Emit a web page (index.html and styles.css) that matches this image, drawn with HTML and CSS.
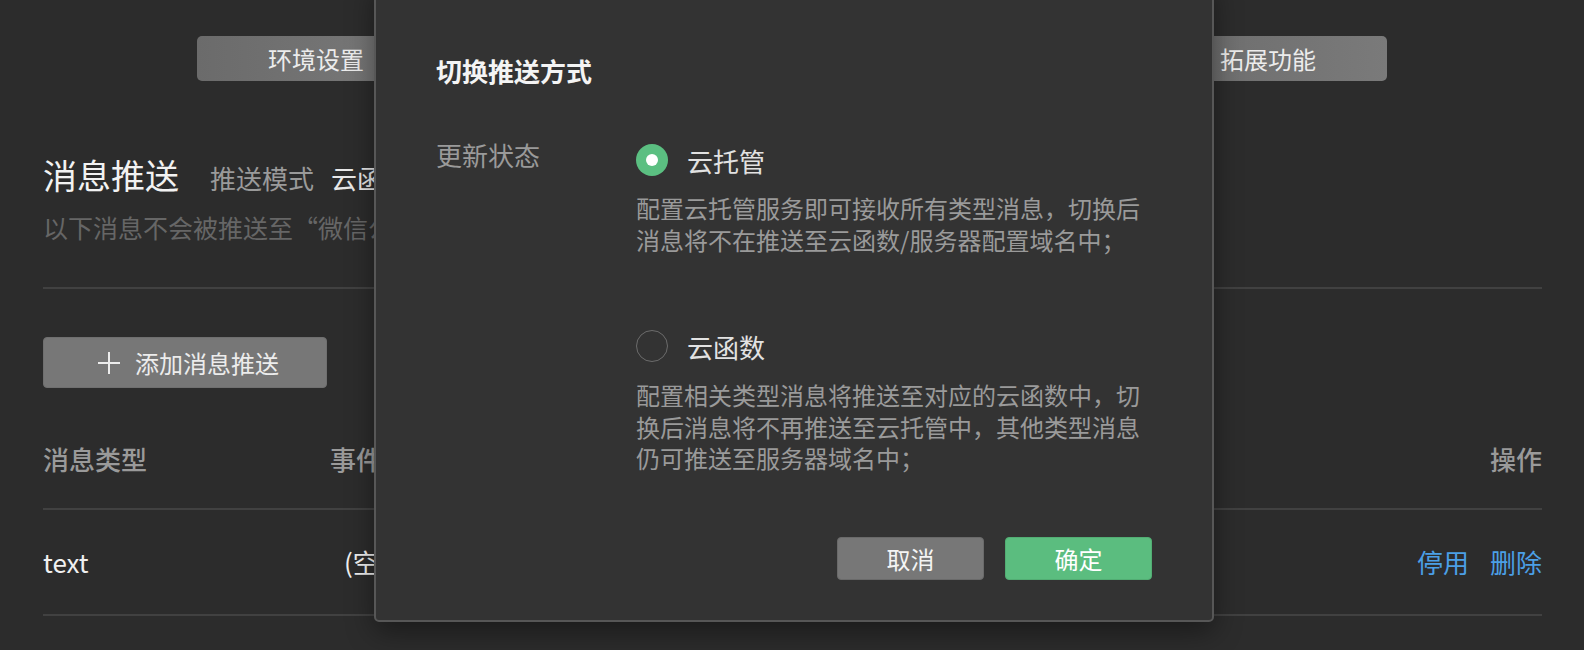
FILE: index.html
```html
<!DOCTYPE html>
<html lang="zh-CN">
<head>
<meta charset="utf-8">
<title>消息推送</title>
<link rel="stylesheet" href="styles.css">
</head>
<body>
<div class="page">
  <div class="tabs">
    <div class="tab">环境设置</div>
    <div class="tab"></div>
    <div class="tab"></div>
    <div class="tab"></div>
    <div class="tab">拓展功能</div>
  </div>

  <div class="head">
    <h1 class="title">消息推送</h1>
    <span class="mode-label">推送模式</span>
    <span class="mode-value">云函数</span>
  </div>
  <p class="subtitle">以下消息不会被推送至“微信公众平台”</p>

  <div class="divider"></div>

  <button class="add-btn">
    <svg class="plus" width="22" height="22" viewBox="0 0 22 22"><path d="M11 0V22M0 11H22" stroke="#ececec" stroke-width="2" fill="none"/></svg>
    <span>添加消息推送</span>
  </button>

  <div class="table">
    <div class="row row-head">
      <div class="cell">消息类型</div>
      <div class="cell">事件类型</div>
      <div class="cell cell-right">操作</div>
    </div>
    <div class="row">
      <div class="cell cell-text">text</div>
      <div class="cell cell-text cell-empty">(空)</div>
      <div class="cell cell-right actions">
        <a class="link">停用</a>
        <a class="link">删除</a>
      </div>
    </div>
  </div>
</div>

<div class="modal">
  <div class="modal-title">切换推送方式</div>
  <div class="form-row">
    <div class="form-label">更新状态</div>
    <div class="options">
      <div class="option">
        <div class="option-line">
          <span class="radio radio-on"></span>
          <span class="option-name">云托管</span>
        </div>
        <p class="option-desc">配置云托管服务即可接收所有类型消息，切换后消息将不在推送至云函数/服务器配置域名中；</p>
      </div>
      <div class="option option-2">
        <div class="option-line">
          <span class="radio"></span>
          <span class="option-name">云函数</span>
        </div>
        <p class="option-desc">配置相关类型消息将推送至对应的云函数中，切换后消息将不再推送至云托管中，其他类型消息仍可推送至服务器域名中；</p>
      </div>
    </div>
  </div>
  <div class="modal-footer">
    <button class="btn btn-cancel">取消</button>
    <button class="btn btn-ok">确定</button>
  </div>
</div>
</body>
</html>
```

FILE: styles.css
```css
* { box-sizing: border-box; }

html, body {
  margin: 0;
  padding: 0;
}

body {
  width: 1584px;
  height: 650px;
  overflow: hidden;
  background: #2c2c2c;
  font-family: "Noto Sans CJK SC", "Noto Sans", sans-serif;
  color: #e6e6e6;
  position: relative;
}

.page {
  padding: 36px 42px 0 43px;
}

.tabs {
  display: flex;
  justify-content: center;
  margin-left: -43px;
  margin-right: -42px;
}

.tab {
  width: 238px;
  height: 45px;
  line-height: 45px;
  text-align: center;
  font-size: 24px;
  color: #ececec;
  background: linear-gradient(90deg, #6b6b6b, #7a7a7a);
}
.tab:first-child { border-radius: 5px 0 0 5px; }
.tab:last-child { border-radius: 0 5px 5px 0; }

.head {
  display: flex;
  align-items: baseline;
  margin-top: 70px;
  height: 48px;
}

.title {
  margin: 0;
  font-size: 34px;
  line-height: 48px;
  font-weight: 400;
  color: #f2f2f2;
}

.mode-label {
  margin-left: 31px;
  font-size: 26px;
  color: #9a9a9a;
}

.mode-value {
  margin-left: 17px;
  font-size: 26px;
  color: #e8e8e8;
}

.subtitle {
  margin: 10px 0 0;
  font-size: 25px;
  line-height: 36px;
  color: #666;
  white-space: nowrap;
}

.divider {
  margin-top: 42px;
  height: 2px;
  background: #414141;
}

.add-btn {
  display: flex;
  align-items: center;
  gap: 15px;
  margin-top: 48px;
  width: 284px;
  height: 51px;
  padding: 0 0 0 54px;
  border: 1px solid #6f6f6f;
  border-radius: 4px;
  background: #777;
  font-family: inherit;
  font-size: 24px;
  color: #ececec;
}
.plus { display: block; }

.table { margin-top: 53px; }

.row {
  display: grid;
  grid-template-columns: 287px 1fr auto;
  align-items: center;
  padding: 34px 0 34px;
  border-bottom: 2px solid #414141;
  font-size: 26px;
  line-height: 36px;
}

.row-head {
  padding: 0 0 31px;
  color: #9a9a9a;
  font-weight: 500;
}

.cell-text { color: #f0f0f0; }
.cell-empty { padding-left: 14px; }
.cell-right { text-align: right; }

.actions {
  display: flex;
  gap: 21px;
}
.link { color: #4b9fe6; }

/* Modal */
.modal {
  position: absolute;
  left: 374px;
  top: -20px;
  width: 840px;
  height: 642px;
  padding: 71px 60px 0;
  background: #333;
  border: 2px solid #575757;
  border-radius: 5px;
  box-shadow: 0 10px 28px rgba(0, 0, 0, 0.4);
  display: flex;
  flex-direction: column;
}

.modal-title {
  font-size: 26px;
  line-height: 36px;
  font-weight: 700;
  color: #f4f4f4;
}

.form-row {
  display: flex;
  margin-top: 48px;
}

.form-label {
  width: 200px;
  flex: none;
  font-size: 26px;
  line-height: 36px;
  color: #9a9a9a;
}

.options {
  padding-top: 5px;
}

.option-line {
  display: flex;
  align-items: center;
  gap: 19px;
  height: 36px;
}

.radio {
  width: 32px;
  height: 32px;
  border-radius: 50%;
  border: 1px solid #6c6c6c;
  flex: none;
  position: relative;
}

.radio-on {
  border: none;
  background: #5bbf81;
}
.radio-on::after {
  content: "";
  position: absolute;
  left: 10px;
  top: 10px;
  width: 12px;
  height: 12px;
  border-radius: 50%;
  background: #fff;
}

.option-name {
  font-size: 26px;
  color: #e2e2e2;
}

.option-desc {
  margin: 14px 0 0;
  width: 510px;
  font-size: 24px;
  line-height: 31.5px;
  color: #9a9a9a;
}

.option-2 { margin-top: 73px; }
.option-2 .option-desc { margin-top: 15px; }

.modal-footer {
  display: flex;
  justify-content: flex-end;
  gap: 21px;
  margin-top: 63px;
}

.btn {
  width: 147px;
  height: 43px;
  border-radius: 4px;
  font-family: inherit;
  font-size: 24px;
  color: #f4f4f4;
}
.btn-cancel {
  background: #777;
  border: 1px solid #6a6a6a;
}
.btn-ok {
  background: #5bbd7f;
  border: 1px solid #52ad73;
  color: #fff;
}
```
